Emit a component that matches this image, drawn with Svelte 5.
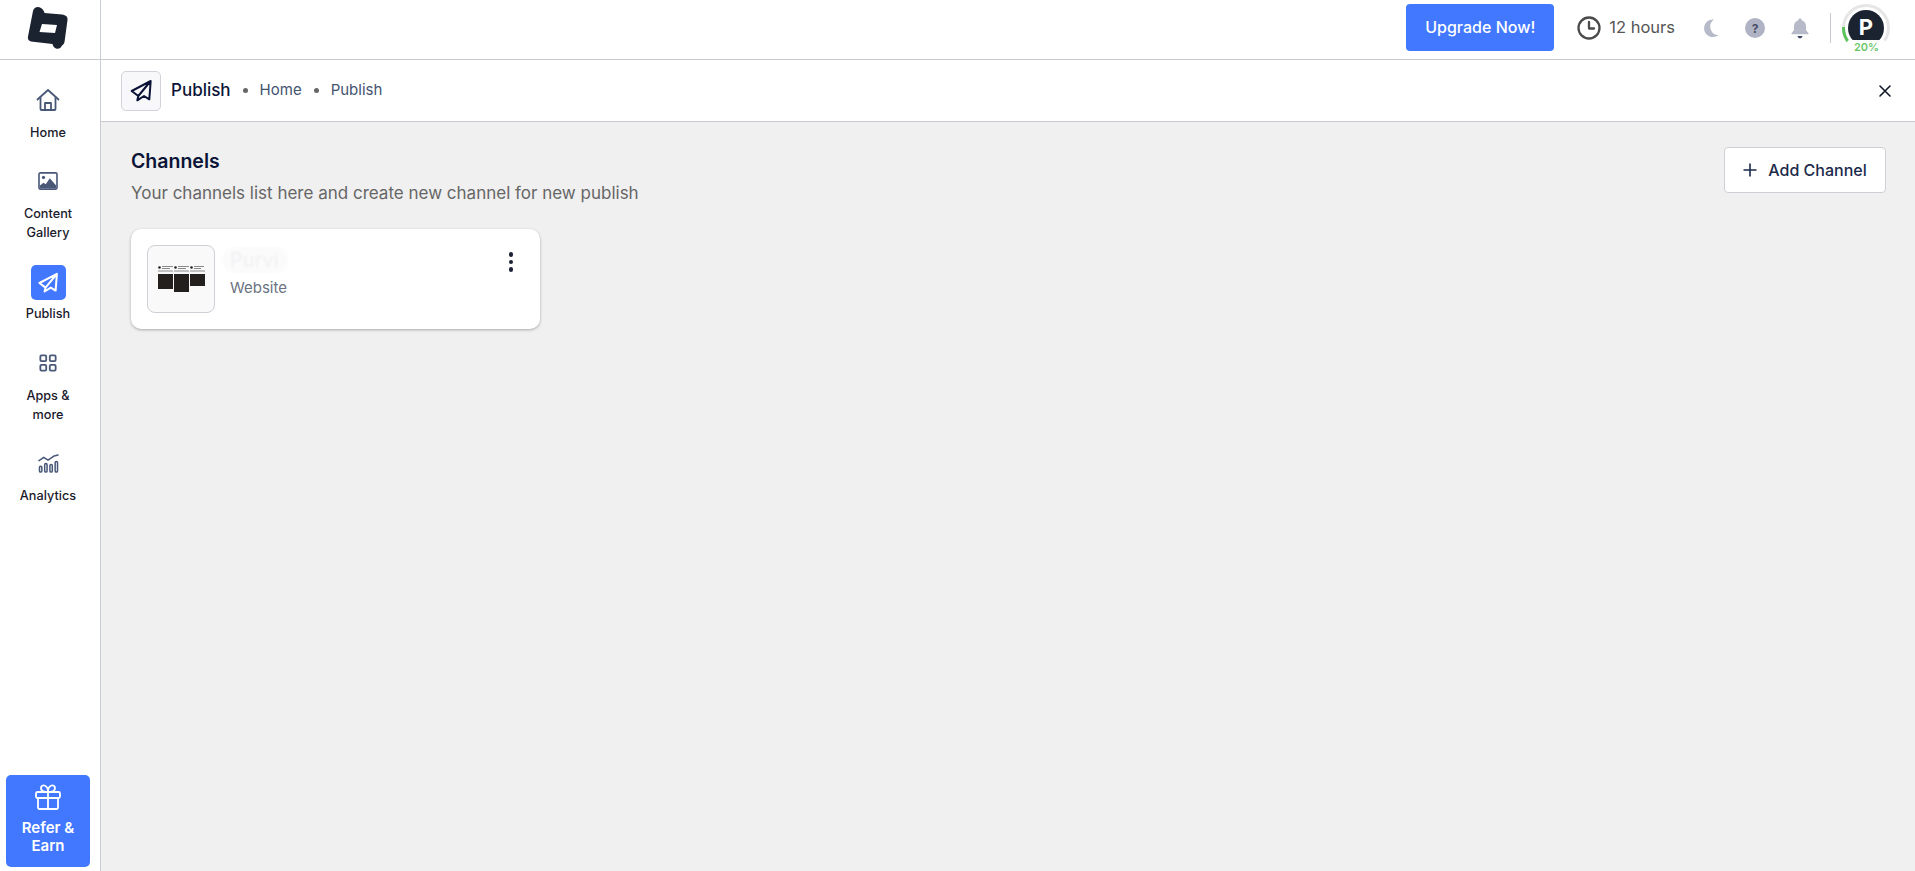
<script>
  let navItems = [
    { id: "home", label: ["Home"] },
    { id: "gallery", label: ["Content", "Gallery"] },
    { id: "publish", label: ["Publish"] },
    { id: "apps", label: ["Apps &", "more"] },
    { id: "analytics", label: ["Analytics"] }
  ];
  const planePath = "M21.700 2 2.700 12l6.600 5L21.700 2l-1.400 18.300L15 17l-6.700 4.300 1-4.300";
</script>

<div class="page">
  <header class="topbar">
    <div class="logo-cell">
      <svg width="44" height="46" viewBox="26 5 44 46">
        <path fill="#1b2330" fill-rule="evenodd" d="M33 11C34 7 38 6 41 8 43 9 44 11 44.500 13L62 14.500C66 15 68 17 67.500 20L64.500 42C64 44 63 45 62 45.500 61 48 58.500 49.500 56 48.500 54 47.500 53 46 52.500 44L31 41.500C28.500 41 27.500 39 28 36.500ZM42 24 39.500 32 55 33 57 25Z"/>
      </svg>
    </div>
    <div class="top-actions">
      <button class="upgrade">Upgrade Now!</button>
      <div class="hours">
        <svg width="24" height="24" viewBox="0 0 24 24" fill="none" stroke="#4b4b4b" stroke-width="2.300" stroke-linecap="round" stroke-linejoin="round"><circle cx="12" cy="12" r="10.500"/><path d="M12 6v6.500h5"/></svg>
        <span>12 hours</span>
      </div>
      <svg class="moon" width="17" height="18" viewBox="0 0 17 18"><path fill="#b6bac9" d="M12 .5A8.800 8.800 0 1 0 16.500 16 8.500 8.500 0 0 1 12 .5z"/></svg>
      <div class="help">?</div>
      <svg class="bell" width="18" height="21" viewBox="0 0 18 21"><path fill="#b6bac9" d="M9 .5c1 0 1.700.7 1.700 1.700 2.900.8 4.300 3.200 4.300 6v3.800l2.500 3.300v1H.5v-1L3 12V8.200c0-2.800 1.400-5.200 4.300-6C7.300 1.200 8 .5 9 .5z"/><path fill="#3f4a66" d="M6.500 18h5c-.3 1.500-1.300 2.300-2.500 2.300S6.800 19.500 6.500 18z"/></svg>
      <div class="vline"></div>
      <div class="avatar">
        <svg class="ring" width="48" height="48" viewBox="0 0 48 48" fill="none" stroke-width="3">
          <circle cx="24" cy="24" r="22.500" stroke="#e6e6e6"/>
          <path d="M1.500 23A22.500 22.500 0 0 0 6 37.500" stroke="#5cc35c"/>
        </svg>
        <div class="circle">P</div>
        <div class="pct">20%</div>
      </div>
    </div>
  </header>

  <div class="body">
    <nav class="sidebar">
      <div class="nav-list">
        {#each navItems as item}
          <div class="nav-item" class:active={item.id === "publish"}>
            <div class="nav-icon">
              {#if item.id === "home"}
                <svg width="24" height="24" viewBox="0 0 24 24" fill="none" stroke="#4a5878" stroke-width="1.800" stroke-linejoin="round" stroke-linecap="round"><path d="M1.500 11.500 12 2l10.500 9.500"/><path d="M4.500 9.500V21a1 1 0 0 0 1 1h13a1 1 0 0 0 1-1V9.500"/><path d="M9 22v-7h6v7"/></svg>
              {:else if item.id === "gallery"}
                <svg width="20" height="18" viewBox="0 0 22 20"><rect x="1" y="1" width="20" height="18" rx="1.500" fill="none" stroke="#4a5878" stroke-width="1.800"/><circle cx="6" cy="6" r="1.800" fill="#4a5878"/><path fill="#4a5878" d="M2 18v-3l4-3 2.500 1.500L13 7l7 8v3z"/></svg>
              {:else if item.id === "publish"}
                <div class="publish-tile">
                  <svg width="22" height="22" viewBox="0 0 24 24" fill="none" stroke="#fff" stroke-width="2.200" stroke-linejoin="round"><path d={planePath}/></svg>
                </div>
              {:else if item.id === "apps"}
                <svg width="18" height="18" viewBox="0 0 20 20" fill="none" stroke="#4a5878" stroke-width="2"><rect x="1.500" y="1.500" width="6.500" height="6.500" rx="1.200"/><rect x="12" y="1.500" width="6.500" height="6.500" rx="1.200"/><rect x="1.500" y="12" width="6.500" height="6.500" rx="1.200"/><rect x="12" y="12" width="6.500" height="6.500" rx="1.200"/></svg>
              {:else}
                <svg width="21" height="19" viewBox="0 0 22 20" fill="none" stroke="#4a5878" stroke-width="1.600" stroke-linecap="round" stroke-linejoin="round"><path d="M1 7l5-3.500 4.500 3L17 2l4-1"/><rect x="1.500" y="13" width="2.500" height="6" rx="1.200"/><rect x="7" y="10" width="2.500" height="9" rx="1.200"/><rect x="12.500" y="11" width="2.500" height="8" rx="1.200"/><rect x="18" y="8" width="2.500" height="11" rx="1.200"/></svg>
              {/if}
            </div>
            <div class="nav-label">
              {#each item.label as line}<div>{line}</div>{/each}
            </div>
          </div>
        {/each}
      </div>
      <div class="refer">
        <svg width="26" height="26" viewBox="0 0 26 26" fill="none" stroke="#fff" stroke-width="1.800" stroke-linejoin="round"><rect x="1" y="8" width="24" height="6" rx="1.500"/><path d="M3 14v9.500a1.500 1.500 0 0 0 1.500 1.500h17a1.500 1.500 0 0 0 1.500-1.500V14"/><path d="M13 8v17"/><path d="M13 8C10 8 6 7.500 6 4.200 6 2 8 1 9.500 1.500 12 2.300 13 5.500 13 8zM13 8c3 0 7-.5 7-3.800C20 2 18 1 16.500 1.500 14 2.300 13 5.500 13 8z"/></svg>
        <div class="refer-label">Refer &amp;<br />Earn</div>
      </div>
    </nav>

    <main class="main">
      <div class="crumbs">
        <div class="crumb-icon">
          <svg width="24" height="24" viewBox="0 0 24 24" fill="none" stroke="#0b1437" stroke-width="2" stroke-linejoin="round"><path d={planePath}/></svg>
        </div>
        <span class="crumb-title">Publish</span>
        <span class="dot"></span>
        <span class="crumb-link">Home</span>
        <span class="dot"></span>
        <span class="crumb-link">Publish</span>
        <svg class="close" width="14" height="14" viewBox="0 0 14 14" stroke="#111827" stroke-width="1.600" stroke-linecap="round"><path d="M2 2l10 10M12 2 2 12"/></svg>
      </div>

      <div class="content">
        <div class="head">
          <div>
            <h1>Channels</h1>
            <p>Your channels list here and create new channel for new publish</p>
          </div>
          <button class="add">
            <svg width="14" height="14" viewBox="0 0 14 14" stroke="#1b2a4a" stroke-width="1.600"><path d="M7 .5v13M.5 7h13"/></svg>
            Add Channel
          </button>
        </div>

        <div class="card">
          <div class="thumb">
            <svg width="47" height="27" viewBox="0 0 47 27">
              <g fill="#8a8a8a">
                <rect x="4" y="0" width="11" height="1"/><rect x="20" y="0" width="11" height="1"/><rect x="36" y="0" width="10" height="1"/>
                <rect x="4" y="2" width="8" height="1"/><rect x="20" y="2" width="8" height="1"/><rect x="36" y="2" width="7" height="1"/>
                <rect x="0" y="4.500" width="15" height="1"/><rect x="16" y="4.500" width="15" height="1"/><rect x="32" y="4.500" width="15" height="1"/>
              </g>
              <g fill="#231f1d">
                <circle cx="1.500" cy="1.500" r="1.300"/><circle cx="17.500" cy="1.500" r="1.300"/><circle cx="33.500" cy="1.500" r="1.300"/>
                <rect x="0" y="8" width="15" height="15"/><rect x="16" y="8" width="15" height="18"/><rect x="32" y="8" width="15" height="12"/>
              </g>
            </svg>
          </div>
          <div class="card-text">
            <div class="card-name">Purvi</div>
            <div class="card-type">Website</div>
          </div>
          <div class="kebab"><i></i><i></i><i></i></div>
        </div>
      </div>
    </main>
  </div>
</div>

<style>
  :global(body) {
    font-family: Inter, "Noto Sans", sans-serif;
    overflow: hidden;
  }
  .page {
    height: 871px;
    display: flex;
    flex-direction: column;
    background: #fff;
  }
  .topbar {
    height: 59px;
    flex: none;
    display: flex;
    align-items: center;
    border-bottom: 1px solid #c9cacf;
  }
  .logo-cell {
    width: 100px;
    height: 59px;
    border-right: 1px solid #c9cdd6;
    display: flex;
    align-items: center;
    justify-content: center;
    flex: none;
  }
  .logo-cell svg {
    margin-left: -4px;
    margin-top: -3px;
  }
  .top-actions {
    margin-left: auto;
    display: flex;
    align-items: center;
    height: 59px;
    box-sizing: border-box;
    padding: 0 25px 3px 0;
  }
  .upgrade {
    width: 148px;
    height: 47px;
    margin-top: -1px;
    padding-bottom: 3px;
    background: #4278ff;
    color: #fff;
    border: 0;
    border-radius: 4px;
    font: 500 16px Inter, sans-serif;
  }
  .hours {
    display: flex;
    align-items: center;
    gap: 8px;
    margin-left: 23px;
    color: #555;
    font-size: 16.500px;
  }
  .hours span {
    margin-bottom: 2px;
  }
  .moon { margin-left: 27px; }
  .help {
    width: 20px;
    height: 20px;
    margin-left: 26px;
    border-radius: 50%;
    background: #b0b3c4;
    color: #4a4f68;
    font-size: 12px;
    font-weight: 700;
    display: flex;
    align-items: center;
    justify-content: center;
  }
  .bell { margin-left: 26px; }
  .vline {
    width: 1px;
    height: 30px;
    background: #c9cacf;
    margin-left: 21px;
  }
  .avatar {
    position: relative;
    width: 48px;
    height: 48px;
    margin-left: 11px;
  }
  .ring {
    position: absolute;
    left: 0;
    top: 0;
  }
  .circle {
    position: absolute;
    left: 6px;
    top: 6px;
    width: 36px;
    height: 36px;
    box-sizing: border-box;
    padding-bottom: 3px;
    border-radius: 50%;
    background: #1b2330;
    color: #fff;
    font-weight: 700;
    font-size: 22px;
    display: flex;
    align-items: center;
    justify-content: center;
  }
  .pct {
    position: absolute;
    left: 5px;
    bottom: 0;
    width: 39px;
    height: 12px;
    line-height: 14px;
    border-radius: 4px 4px 12px 12px;
    background: #fff;
    color: #6cc76c;
    font-size: 11px;
    font-weight: 600;
    text-align: center;
  }
  .body {
    flex: 1;
    display: flex;
    min-height: 0;
  }
  .sidebar {
    width: 100px;
    flex: none;
    border-right: 1px solid #c9cdd6;
    display: flex;
    flex-direction: column;
    justify-content: space-between;
    padding-bottom: 4px;
  }
  .nav-list {
    padding: 28px 4px 0 0;
    display: flex;
    flex-direction: column;
    gap: 27px;
  }
  .nav-item {
    display: flex;
    flex-direction: column;
    align-items: center;
  }
  .nav-item.active {
    margin: -4px 0 1px;
  }
  .nav-icon {
    height: 24px;
    display: flex;
    align-items: center;
    justify-content: center;
    margin-bottom: 11px;
  }
  .nav-item.active .nav-icon {
    height: 35px;
    margin-bottom: 4px;
  }
  .publish-tile {
    width: 35px;
    height: 35px;
    border-radius: 5px;
    background: #4278ff;
    display: flex;
    align-items: center;
    justify-content: center;
  }
  .nav-label {
    font-size: 12.700px;
    font-weight: 500;
    line-height: 19px;
    color: #1a1a2b;
    text-align: center;
  }
  .refer {
    width: 84px;
    height: 92px;
    margin-left: 6px;
    box-sizing: border-box;
    padding-top: 9px;
    background: #4278ff;
    border-radius: 5px;
    color: #fff;
    display: flex;
    flex-direction: column;
    align-items: center;
  }
  .refer-label {
    margin-top: 9px;
    font-size: 15px;
    font-weight: 600;
    line-height: 18px;
    text-align: center;
  }
  .main {
    flex: 1;
    display: flex;
    flex-direction: column;
    background: #f0f0f0;
    min-width: 0;
  }
  .crumbs {
    height: 61px;
    flex: none;
    background: #fff;
    border-bottom: 1px solid #c9cacf;
    display: flex;
    align-items: center;
    padding: 0 23px 0 20px;
  }
  .crumb-icon {
    width: 40px;
    height: 40px;
    box-sizing: border-box;
    border: 1px solid #d2d3da;
    border-radius: 5px;
    background: #f8f8fa;
    display: flex;
    align-items: center;
    justify-content: center;
  }
  .crumb-title {
    margin: 0 0 2px 10px;
    font-size: 17px;
    font-weight: 500;
    color: #0b1437;
  }
  .dot {
    width: 5px;
    height: 5px;
    margin: 0 12px;
    border-radius: 50%;
    background: #666;
  }
  .crumb-link {
    margin-bottom: 2px;
    font-size: 15px;
    color: #44546f;
  }
  .close { margin-left: auto; }
  .content {
    padding: 27px 29px 0 30px;
  }
  .head {
    display: flex;
    justify-content: space-between;
    align-items: flex-start;
  }
  h1 {
    margin: 0;
    font-size: 19.500px;
    line-height: 24px;
    font-weight: 600;
    color: #0b1437;
  }
  .head p {
    margin: 10px 0 0;
    font-size: 17px;
    line-height: 20px;
    color: #666;
  }
  .add {
    width: 162px;
    height: 46px;
    margin-top: -2px;
    background: #fff;
    border: 1px solid #ced0d6;
    border-radius: 4px;
    color: #1b2a4a;
    font: 500 16px Inter, sans-serif;
    display: flex;
    align-items: center;
    justify-content: center;
    gap: 11px;
  }
  .card {
    width: 409px;
    height: 100px;
    margin-top: 26px;
    padding: 16px;
    box-sizing: border-box;
    background: #fff;
    border-radius: 10px;
    box-shadow: 0 1px 3px rgba(0, 0, 0, 0.3);
    display: flex;
    align-items: flex-start;
    position: relative;
  }
  .thumb {
    width: 68px;
    height: 68px;
    box-sizing: border-box;
    border: 1px solid #cfcfd6;
    border-radius: 8px;
    background: #f9f9fa;
    display: flex;
    align-items: center;
    justify-content: center;
    flex: none;
  }
  .card-text {
    margin-left: 15px;
  }
  .card-name {
    width: fit-content;
    margin: 2px 0 0 -8px;
    padding: 1px 9px 0 8px;
    font-size: 20px;
    line-height: 25px;
    color: #f0f0f3;
    background: #fbfbfb;
    border-radius: 13px;
    filter: blur(1px);
  }
  .card-type {
    margin-top: 5px;
    font-size: 15px;
    line-height: 20px;
    color: #6b7280;
  }
  .kebab {
    position: absolute;
    top: 23px;
    right: 27px;
    display: flex;
    flex-direction: column;
    gap: 3.200px;
  }
  .kebab i {
    width: 4.500px;
    height: 4.500px;
    border-radius: 50%;
    background: #1a2233;
  }
</style>
